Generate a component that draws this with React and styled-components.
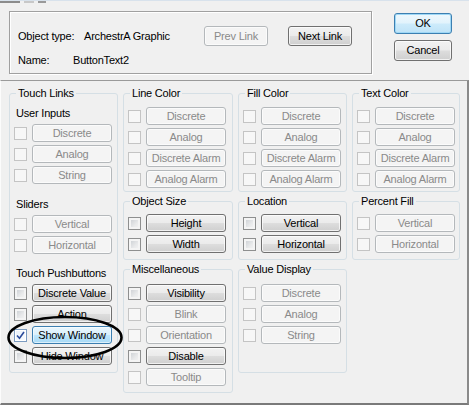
import styled, { createGlobalStyle } from 'styled-components';

const GlobalStyle = createGlobalStyle`
  html, body { margin: 0; padding: 0; background: #f0f0f0; }
  body {
    font-family: "Liberation Sans", Arial, sans-serif;
    font-size: 11px;
    letter-spacing: -0.2px;
    color: #000;
  }
`;

const Page = styled.div`
  position: relative;
  width: 469px;
  height: 405px;
  overflow: hidden;
  background: #f0f0f0;
`;

const TopStrip = styled.div`
  height: 3px;
  border-top: 1px solid #d8e2ec;
  box-sizing: border-box;
  display: flex;
  gap: 4px;
`;

const TabStub = styled.div`
  width: ${p => p.w}px;
  height: 2px;
  background: ${p => p.c};
`;

const Header = styled.div`
  height: 77px;
  box-sizing: border-box;
  display: flex;
  align-items: flex-start;
  gap: 22px;
  padding: 8px 17px 0 9px;
`;

const InfoBox = styled.div`
  width: 363px;
  height: 63px;
  box-sizing: border-box;
  border: 1px solid #a0a0a0;
  box-shadow: inset 1px 1px 0 #fff, 1px 1px 0 #fff;
  padding: 14px 19px 0 8px;
`;

const InfoRow = styled.div`
  display: flex;
  align-items: center;
  height: ${p => p.h || 13}px;
  margin-top: ${p => p.mt || 0}px;
  line-height: 13px;
`;

const InfoLabel = styled.span`
  width: ${p => p.w}px;
  flex: none;
`;

const NavButtons = styled.div`
  margin-left: auto;
  display: flex;
  gap: 20px;
`;

const DialogButtons = styled.div`
  display: flex;
  flex-direction: column;
  gap: 6px;
  padding-top: 2px;
`;

const Button = styled.div`
  box-sizing: border-box;
  width: ${p => p.w || 80}px;
  height: ${p => p.h || 18}px;
  display: flex;
  align-items: center;
  justify-content: center;
  border-radius: 3px;
  line-height: 13px;
  white-space: nowrap;
  border: 1px solid #707070;
  color: #000;
  background: linear-gradient(#f2f2f2 0%, #ebebeb 48%, #dddddd 52%, #cfcfcf 100%);
  box-shadow: inset 0 0 0 1px rgba(255,255,255,0.7);
  ${p => p.disabled && `
    border-color: #b4b8bb;
    color: #8a8a8a;
    background: #f4f4f4;
    box-shadow: inset 0 0 0 1px #fbfbfb;
  `}
  ${p => p.hot && `
    border-color: #3c7fb1;
    background: linear-gradient(#eaf6fd 0%, #d9f0fc 48%, #bee6fd 52%, #a7d9f5 100%);
    box-shadow: inset 0 0 0 1px rgba(255,255,255,0.6);
  `}
  ${p => p.isDefault && `
    border-color: #3c7fb1;
    background: linear-gradient(#eef8fd 0%, #e2f3fc 48%, #cdebfb 52%, #bfe3f7 100%);
    box-shadow: inset 0 0 0 1px #9fd8f6;
  `}
`;

const Panel = styled.div`
  height: 325px;
  box-sizing: border-box;
  border-top: 1px solid #9a9a9a;
  border-left: 1px solid #fcfcfc;
  border-right: 2px solid #8a8a8a;
  border-bottom: 2px solid #7a7a7a;
  padding: 6px 0 0 8px;
`;

const Grid = styled.div`
  display: grid;
  grid-template-columns: 109px 110px 109px 108px;
  column-gap: 5px;
  row-gap: 3px;
  align-items: start;
`;

const Group = styled.fieldset`
  margin: 0;
  min-width: 0;
  box-sizing: border-box;
  border: 1px solid #d5dfe5;
  border-radius: 3px;
  padding: ${p => p.pt || 7}px 4px ${p => p.pb || 3}px 4px;
  grid-row: ${p => p.span ? '1 / span 3' : 'auto'};
  display: flex;
  flex-direction: column;
  gap: 3px;
`;

const Legend = styled.legend`
  margin-left: 2px;
  padding: 0 2px;
  line-height: 13px;
`;

const SubHeading = styled.div`
  margin: ${p => p.mt || 0}px 0 1px 2px;
  line-height: 13px;
`;

const Row = styled.div`
  display: flex;
  align-items: center;
  gap: 5px;
`;

const Check = styled.div`
  width: 13px;
  height: 13px;
  box-sizing: border-box;
  flex: none;
  border: 1px solid #8e8f8f;
  background: linear-gradient(135deg, #c6cacf 0%, #e9eaeb 60%, #f6f6f6 100%);
  box-shadow: inset 0 0 0 2px #f4f4f4;
  display: flex;
  align-items: center;
  justify-content: center;
  ${p => p.disabled && `
    border-color: #c4c4c4;
    background: #f7f7f7;
    box-shadow: none;
  `}
  ${p => p.checked && `
    border-color: #7b9bc0;
    background: linear-gradient(135deg, #e9f1fa, #fafcfe);
    box-shadow: inset 0 0 0 1px #ffffff;
  `}
`;

const Oval = styled.svg`
  position: absolute;
  left: 5px;
  top: 314px;
  pointer-events: none;
`;

function LinkRow({ label, on, hot, checked }) {
  return (
    <Row>
      <Check disabled={!on} checked={checked}>
        {checked && (
          <svg width="9" height="9" viewBox="0 0 9 9">
            <path d="M1 4.5 L3.5 7.2 L8 1" fill="none" stroke="#2a4a9a" strokeWidth="1.6" />
          </svg>
        )}
      </Check>
      <Button disabled={!on} hot={hot}>{label}</Button>
    </Row>
  );
}

const off = labels => labels.map(l => ({ label: l, on: false }));
const colorItems = off(['Discrete', 'Analog', 'Discrete Alarm', 'Analog Alarm']);

const groups = [
  { title: 'Line Color', items: colorItems },
  { title: 'Fill Color', items: colorItems },
  { title: 'Text Color', items: colorItems },
  { title: 'Object Size', pt: 6, pb: 6, items: [{ label: 'Height', on: true }, { label: 'Width', on: true }] },
  { title: 'Location', pt: 6, pb: 6, items: [{ label: 'Vertical', on: true }, { label: 'Horizontal', on: true }] },
  { title: 'Percent Fill', pt: 6, pb: 6, items: off(['Vertical', 'Horizontal']) },
  {
    title: 'Miscellaneous', pt: 8, pb: 6,
    items: [
      { label: 'Visibility', on: true },
      { label: 'Blink', on: false },
      { label: 'Orientation', on: false },
      { label: 'Disable', on: true },
      { label: 'Tooltip', on: false },
    ],
  },
  { title: 'Value Display', pt: 8, pb: 28, items: off(['Discrete', 'Analog', 'String']) },
];

export default function App() {
  return (
    <Page>
      <GlobalStyle />
      <TopStrip>
        <TabStub w={20} c="#8c8c8c" />
        <TabStub w={10} c="#c8c8c8" />
        <TabStub w={8} c="#9a9a9a" />
      </TopStrip>

      <Header>
        <InfoBox>
          <InfoRow h={20}>
            <InfoLabel w={66}>Object type:</InfoLabel>
            <span>ArchestrA Graphic</span>
            <NavButtons>
              <Button w={64} h={20} disabled>Prev Link</Button>
              <Button w={64} h={20}>Next Link</Button>
            </NavButtons>
          </InfoRow>
          <InfoRow mt={8}>
            <InfoLabel w={55}>Name:</InfoLabel>
            <span>ButtonText2</span>
          </InfoRow>
        </InfoBox>
        <DialogButtons>
          <Button w={58} h={21} isDefault>OK</Button>
          <Button w={58} h={21}>Cancel</Button>
        </DialogButtons>
      </Header>

      <Panel>
        <Grid>
          <Group span pb={7}>
            <Legend>Touch Links</Legend>
            <SubHeading>User Inputs</SubHeading>
            {off(['Discrete', 'Analog', 'String']).map(it => <LinkRow key={it.label} {...it} />)}
            <SubHeading mt={11}>Sliders</SubHeading>
            {off(['Vertical', 'Horizontal']).map(it => <LinkRow key={it.label} {...it} />)}
            <SubHeading mt={10}>Touch Pushbuttons</SubHeading>
            <LinkRow label="Discrete Value" on />
            <LinkRow label="Action" on />
            <LinkRow label="Show Window" on hot checked />
            <LinkRow label="Hide Window" on />
          </Group>
          {groups.map(g => (
            <Group key={g.title} pt={g.pt} pb={g.pb}>
              <Legend>{g.title}</Legend>
              {g.items.map(it => <LinkRow key={it.label} {...it} />)}
            </Group>
          ))}
        </Grid>
      </Panel>

      <Oval width="120" height="48" viewBox="0 0 120 48">
        <ellipse cx="60" cy="23.5" rx="56.5" ry="20.5" fill="none" stroke="#000" strokeWidth="2.6" />
      </Oval>
    </Page>
  );
}
